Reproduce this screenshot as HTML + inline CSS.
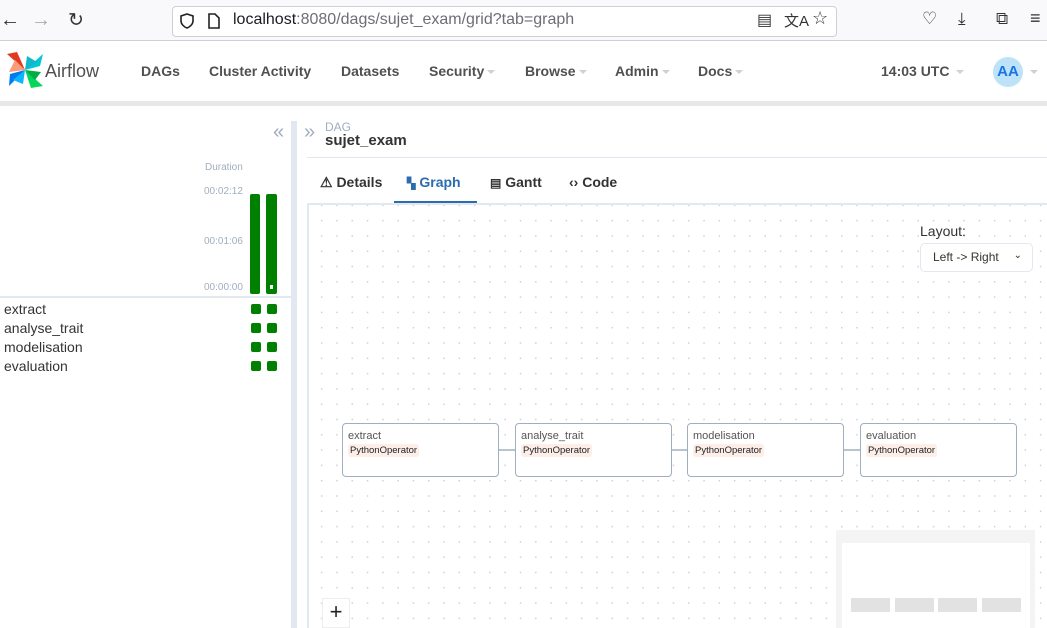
<!DOCTYPE html>
<html><head><meta charset="utf-8"><style>
*{box-sizing:border-box;margin:0;padding:0}
body{width:1047px;height:628px;overflow:hidden;background:#fff;font-family:"Liberation Sans",sans-serif;position:relative}
.abs{position:absolute}
.nav a{position:absolute;top:63px;font-weight:bold;font-size:14px;color:#51504f}
.car{display:inline-block;width:0;height:0;border-left:4px solid transparent;border-right:4px solid transparent;border-top:4px solid #d8cbd8;margin-left:3px;vertical-align:middle}
.node{position:absolute;top:423px;width:157px;height:54px;border:1px solid #a0aec0;border-radius:4px;background:#fff}
.node .t{position:absolute;left:5px;top:6px;font-size:11px;color:#555}
.node .p{position:absolute;left:5px;top:20px;font-size:9.5px;color:#222;background:#fdeee8;padding:1px 2px;border-radius:3px}
.edge{position:absolute;top:449px;height:2px;background:#b8c4d0}
.task{position:absolute;left:4px;font-size:14px;color:#333}
.sq{position:absolute;width:10px;height:10px;background:#008000;border-radius:2px}
</style></head><body>
<div class="abs" style="left:0;top:0;width:1047px;height:41px;background:#f9f9fb;border-bottom:1px solid #cfcfd8"></div>
<div class="abs" style="left:0;top:9px;font-size:20px;color:#333">←</div>
<div class="abs" style="left:31px;top:9px;font-size:20px;color:#aaa">→</div>
<div class="abs" style="left:68px;top:9px;font-size:19px;color:#333">↻</div>
<div class="abs" style="left:172px;top:6px;width:665px;height:31px;background:#fff;border:1px solid #cfcfd8;border-radius:4px"></div>
<svg class="abs" style="left:178px;top:12px" width="18" height="18" viewBox="0 0 18 18"><path d="M9 2 L15 4 V9 C15 12 12 15 9 16 C6 15 3 12 3 9 V4 Z" fill="none" stroke="#222" stroke-width="1.6"/></svg>
<svg class="abs" style="left:206px;top:12px" width="16" height="18" viewBox="0 0 16 18"><path d="M3 2 H9 L13 6 V16 H3 Z" fill="none" stroke="#222" stroke-width="1.6"/></svg>
<div class="abs" style="left:233px;top:11px;font-size:16px;color:#1c1b22">localhost<span style="color:#6d6d75">:8080/dags/sujet_exam/grid?tab=graph</span></div>
<div class="abs" style="left:757px;top:10px;font-size:16px;color:#333">▤</div>
<div class="abs" style="left:784px;top:10px;font-size:15px;color:#333">文A</div>
<div class="abs" style="left:812px;top:8px;font-size:18px;color:#333">☆</div>
<div class="abs" style="left:922px;top:9px;font-size:17px;color:#333">♡</div>
<div class="abs" style="left:958px;top:9px;font-size:17px;color:#333">⤓</div>
<div class="abs" style="left:996px;top:9px;font-size:17px;color:#333">⧉</div>
<div class="abs" style="left:1030px;top:8px;font-size:18px;color:#333">≡</div>
<div class="abs" style="left:0;top:42px;width:1047px;height:60px;background:#fff"></div>
<div class="abs" style="left:0;top:101px;width:1047px;height:5px;background:#e8e8e8"></div>
<svg class="abs" style="left:7px;top:52px" width="36" height="36" viewBox="0 0 36 36">
<path d="M18 18 L0 2 L10 0 Z" fill="#e43921"/><path d="M18 18 L36 2 L33 14 Z" fill="#00c7d4"/>
<path d="M18 18 L36 34 L24 36 Z" fill="#04d659"/><path d="M18 18 L2 34 L3 22 Z" fill="#017cee"/>
<path d="M18 18 L8 8 L2 20 Z" fill="#fa9b7a"/><path d="M18 18 L30 10 L20 4Z" fill="#11b8cc"/>
<path d="M18 18 L28 28 L34 20Z" fill="#00ad46"/><path d="M18 18 L6 28 L16 32Z" fill="#0cb6ff"/></svg>
<div class="abs" style="left:45px;top:61px;font-size:18px;color:#51504f">Airflow</div>
<div class="nav">
<a style="left:141px">DAGs</a><a style="left:209px">Cluster Activity</a><a style="left:341px">Datasets</a>
<a style="left:429px">Security<span class="car"></span></a><a style="left:525px">Browse<span class="car"></span></a>
<a style="left:615px">Admin<span class="car"></span></a><a style="left:698px">Docs<span class="car"></span></a>
<a style="left:881px">14:03 UTC <span class="car"></span></a></div>
<div class="abs" style="left:993px;top:57px;width:30px;height:30px;border-radius:50%;background:#bee3f8;color:#1a73e8;font-weight:bold;font-size:15px;text-align:center;line-height:30px">AA</div>
<span class="car abs" style="left:1027px;top:70px"></span>
<div class="abs" style="left:273px;top:121px;font-size:20px;color:#a0aec0">«</div>
<div class="abs" style="left:291px;top:121px;width:6px;height:507px;background:#e2e8f0"></div>
<div class="abs" style="left:205px;top:162px;font-size:10px;color:#a0aec0">Duration</div>
<div class="abs" style="left:204px;top:186px;font-size:10px;color:#a0aec0">00:02:12</div>
<div class="abs" style="left:204px;top:236px;font-size:10px;color:#a0aec0">00:01:06</div>
<div class="abs" style="left:204px;top:282px;font-size:10px;color:#a0aec0">00:00:00</div>
<div class="abs" style="left:250px;top:194px;width:10px;height:100px;background:#008000;border-radius:2px"></div>
<div class="abs" style="left:266px;top:194px;width:11px;height:100px;background:#008000;border-radius:2px"></div>
<div class="abs" style="left:270px;top:285px;width:3px;height:4px;background:#fff"></div>
<div class="abs" style="left:0;top:296px;width:291px;height:2px;background:#e2e8f0"></div>
<div class="task" style="top:301px">extract</div><div class="task" style="top:320px">analyse_trait</div>
<div class="task" style="top:339px">modelisation</div><div class="task" style="top:358px">evaluation</div>
<div class="sq" style="left:251px;top:304px"></div><div class="sq" style="left:267px;top:304px"></div>
<div class="sq" style="left:251px;top:323px"></div><div class="sq" style="left:267px;top:323px"></div>
<div class="sq" style="left:251px;top:342px"></div><div class="sq" style="left:267px;top:342px"></div>
<div class="sq" style="left:251px;top:361px"></div><div class="sq" style="left:267px;top:361px"></div>
<div class="abs" style="left:304px;top:121px;font-size:20px;color:#a0aec0">»</div>
<div class="abs" style="left:325px;top:120px;font-size:12px;color:#a0aec0">DAG</div>
<div class="abs" style="left:325px;top:132px;font-size:15px;font-weight:bold;color:#333">sujet_exam</div>
<div class="abs" style="left:307px;top:157px;width:740px;height:1px;background:#e2e8f0"></div>
<div class="abs" style="left:320px;top:174px;font-size:14px;font-weight:bold;color:#333">⚠ Details</div>
<div class="abs" style="left:407px;top:174px;font-size:14px;font-weight:bold;color:#2b6cb0"><span style="font-size:11px">▚</span> Graph</div>
<div class="abs" style="left:490px;top:174px;font-size:14px;font-weight:bold;color:#333"><span style="font-size:12px">▤</span> Gantt</div>
<div class="abs" style="left:569px;top:174px;font-size:14px;font-weight:bold;color:#333">‹› Code</div>
<div class="abs" style="left:394px;top:201px;width:83px;height:3px;background:#2b6cb0"></div>
<div class="abs" style="left:307px;top:203px;width:740px;height:425px;border-top:2px solid #e2e8f0;border-left:2px solid #e2e8f0;background-image:radial-gradient(#d0d0d0 0.7px,transparent 0.8px);background-size:15.3px 15.3px;background-position:5px 8px"></div>
<div class="abs" style="left:920px;top:223px;font-size:14px;color:#333">Layout:</div>
<div class="abs" style="left:920px;top:243px;width:113px;height:29px;border:1px solid #e2e8f0;border-radius:5px;background:#fff;font-size:12px;color:#333;padding:6px 0 0 12px">Left -&gt; Right<span style="position:absolute;right:10px;top:6px;font-size:10px">⌄</span></div>
<div class="edge" style="left:499px;width:16px"></div><div class="edge" style="left:672px;width:15px"></div><div class="edge" style="left:844px;width:16px"></div>
<div class="node" style="left:342px"><span class="t">extract</span><span class="p">PythonOperator</span></div>
<div class="node" style="left:515px"><span class="t">analyse_trait</span><span class="p">PythonOperator</span></div>
<div class="node" style="left:687px"><span class="t">modelisation</span><span class="p">PythonOperator</span></div>
<div class="node" style="left:860px"><span class="t">evaluation</span><span class="p">PythonOperator</span></div>
<div class="abs" style="left:836px;top:530px;width:199px;height:98px;background:#f4f4f4"></div>
<div class="abs" style="left:842px;top:543px;width:188px;height:85px;background:#fff"></div>
<div class="abs" style="left:851px;top:598px;width:39px;height:14px;background:#e2e2e2"></div>
<div class="abs" style="left:895px;top:598px;width:39px;height:14px;background:#e2e2e2"></div>
<div class="abs" style="left:938px;top:598px;width:39px;height:14px;background:#e2e2e2"></div>
<div class="abs" style="left:982px;top:598px;width:39px;height:14px;background:#e2e2e2"></div>
<div class="abs" style="left:322px;top:598px;width:28px;height:30px;background:#fff;border:1px solid #eee;font-size:22px;text-align:center;line-height:26px;color:#222">+</div>
</body></html>
